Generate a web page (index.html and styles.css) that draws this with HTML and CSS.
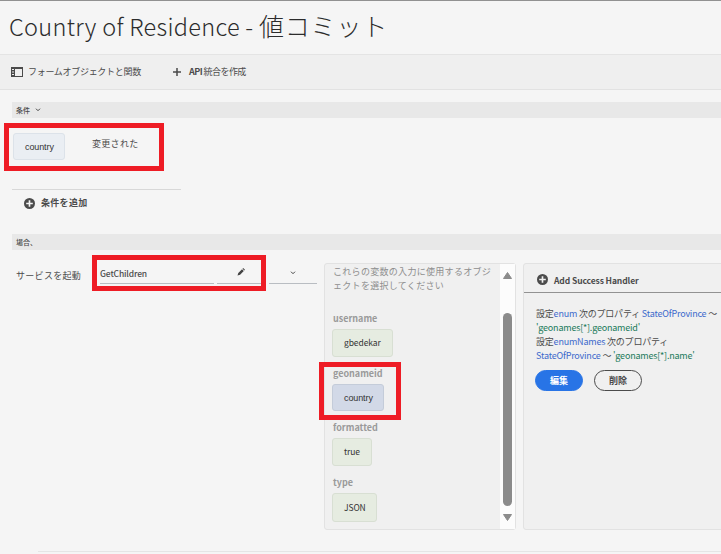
FILE: index.html
```html
<!DOCTYPE html>
<html lang="ja">
<head>
<meta charset="utf-8">
<title>Country of Residence - 値コミット</title>
<link rel="stylesheet" href="styles.css">
</head>
<body>
<header class="title-bar"><h1><span class="title-en">Country of Residence - </span><span class="title-ja">値コミット</span></h1></header>
<nav class="toolbar">
  <div class="tool objects">
    <svg width="12" height="10" viewBox="0 0 12 10"><path d="M0 0h12v10H0zM4 2v7h7V2z" fill="#4b4b4b" fill-rule="evenodd"/><path d="M1 2.5h2M1 5h2M1 7.5h2" stroke="#eee"/></svg>
    <span class="objects-label">フォームオブジェクトと関数</span>
  </div>
  <div class="tool create">
    <svg width="8" height="8" viewBox="0 0 8 8"><path d="M4 0v8M0 4h8" stroke="#4b4b4b" stroke-width="1.5"/></svg>
    <span class="create-label"><b>API</b> 統合を作成</span>
  </div>
</nav>
<main>
  <div class="section-bar"><span>条件</span><svg class="chev" width="6" height="4" viewBox="0 0 6 4"><path d="M1 .7l2 2 2-2" fill="none" stroke="#444"/></svg></div>
  <section class="condition">
    <div class="condition-row">
      <span class="pill blue light">country</span>
      <span class="changed">変更された</span>
      <i class="mark mark-condition"></i>
    </div>
    <div class="add-condition">
      <svg width="11" height="11" viewBox="0 0 10 10"><circle cx="5" cy="5" r="5" fill="#4b4b4b"/><path d="M5 2v6M2 5h6" stroke="#f5f5f5" stroke-width="1.5"/></svg>
      <span>条件を追加</span>
    </div>
  </section>
  <div class="section-bar"><span>場合、</span></div>
  <section class="action">
    <span class="invoke">サービスを起動</span>
    <div class="fields">
      <div class="field name">GetChildren</div>
      <div class="field edit"><svg width="8" height="8" viewBox="0 0 8 8"><path d="M.5 7.5l.8-2.6L5 1.2 6.8 3 3.1 6.7zM5.5.7L6.2 0 8 1.8l-.7.7z" fill="#444"/></svg></div>
      <div class="field pick"><svg width="6" height="4" viewBox="0 0 6 4"><path d="M1 .7l2 2 2-2" fill="none" stroke="#444"/></svg></div>
      <i class="mark mark-service"></i>
    </div>
    <div class="panel inputs">
      <div class="inputs-body">
        <p class="hint"><span>これらの変数の入力に使用するオブジ</span><br><span>ェクトを選択してください</span></p>
        <div class="param"><label>username</label><span class="pill green user">gbedekar</span></div>
        <div class="param geo"><label>geonameid</label><span class="pill blue">country</span><i class="mark mark-geo"></i></div>
        <div class="param formatted"><label>formatted</label><span class="pill green true">true</span></div>
        <div class="param type"><label>type</label><span class="pill green json">JSON</span></div>
      </div>
      <div class="scroll">
        <svg width="9" height="7" viewBox="0 0 9 7"><path d="M4.5.5L8.5 6.5H.5z" fill="#8b8b8b" stroke="#8b8b8b" stroke-linejoin="round"/></svg>
        <div class="thumb"></div>
        <svg width="9" height="7" viewBox="0 0 9 7"><path d="M4.5 6.5L.5.5h8z" fill="#8b8b8b" stroke="#8b8b8b" stroke-linejoin="round"/></svg>
      </div>
    </div>
    <div class="panel handler">
      <div class="handler-head">
        <svg width="11" height="11" viewBox="0 0 10 10"><circle cx="5" cy="5" r="5" fill="#4b4b4b"/><path d="M5 2v6M2 5h6" stroke="#f0f0f0" stroke-width="1.5"/></svg>
        <span>Add Success Handler</span>
      </div>
      <div class="rules">
        <div>設定<em>enum</em> 次のプロパティ <em>StateOfProvince</em> ～</div>
        <div><q>'geonames[*].geonameid'</q></div>
        <div>設定<em>enumNames</em> 次のプロパティ</div>
        <div><em>StateOfProvince</em> ～ <q>'geonames[*].name'</q></div>
      </div>
      <div class="buttons"><button class="primary">編集</button><button>削除</button></div>
    </div>
  </section>
  <hr class="footer-line">
</main>
</body>
</html>
```
FILE: styles.css
```css
* { box-sizing: border-box; }
body {
  margin: 0;
  width: 721px;
  height: 554px;
  overflow: hidden;
  background: #f5f5f5;
  color: #4b4b4b;
  font: 9px/12px "Noto Sans CJK JP", sans-serif;
  white-space: nowrap;
}
svg { display: block; flex: none; }
.title-bar {
  height: 55px;
  border-top: 1px solid #919191;
  border-bottom: 1px solid #e4e4e4;
  padding: 4px 0 0 9px;
}
h1 { margin: 0; font-size: 25px; line-height: 40px; font-weight: 300; color: #2c2c2c; white-space: pre; }
.title-en { font-size: 23.5px; letter-spacing: .3px; }
.title-ja { letter-spacing: .8px; }
.toolbar {
  display: flex;
  align-items: center;
  height: 35px;
  background: #efefef;
  border-bottom: 1px solid #e2e2e2;
}
.tool { display: flex; align-items: center; }
.objects { margin-left: 11px; gap: 5px; width: 162px; }
.objects-label { letter-spacing: -.3px; }
.create { gap: 8px; }
.create-label { letter-spacing: -.55px; }
main { padding: 12px 0 0 12px; }
.section-bar {
  display: flex;
  align-items: center;
  gap: 5px;
  height: 16px;
  padding: 0 0 1px 4px;
  background: #e8e8e8;
  font-size: 7px;
  font-weight: 500;
}
.chev { margin-top: 1px; }
.condition { height: 116px; padding-top: 15px; }
.condition-row { position: relative; display: flex; height: 57px; width: 169px; padding-left: 1px; border-bottom: 1px solid #d8d8d8; }
.changed { margin: 5px 0 0 27px; letter-spacing: .3px; }
.pill {
  display: flex;
  align-items: center;
  width: 52px;
  height: 27px;
  padding-left: 11px;
  border: 1px solid;
  border-radius: 3px;
  color: #333;
}
.blue { background: #d2d9e7; border-color: #c4ccd9; font-family: "Liberation Sans", sans-serif; letter-spacing: -.1px; }
.light { background: #eaeef3; border-color: #dce2e9; }
.green { background: #e6ece1; border-color: #d8dfd3; height: 28px; padding-bottom: 2px; font-size: 8.5px; letter-spacing: -.1px; }
.user { width: 61px; }
.true { width: 40px; }
.json { width: 45px; height: 29px; }
.mark { position: absolute; border: 5px solid #ee1c25; }
.mark-condition { left: -8px; top: -10px; width: 160px; height: 48px; }
.add-condition { display: flex; align-items: center; gap: 6px; padding: 7px 0 0 12px; font-weight: 700; }
.add-condition span { letter-spacing: .3px; }
.action { display: flex; height: 280px; padding-top: 13px; }
.invoke { flex: none; width: 88px; padding: 7px 0 0 4px; letter-spacing: .3px; }
.fields { flex: none; position: relative; display: flex; gap: 3px; width: 224px; height: 21px; }
.field { flex: none; border-bottom: 1px solid #b9bdc2; display: flex; align-items: center; justify-content: center; }
.name { width: 114px; justify-content: flex-start; padding-bottom: 1px; font-size: 8.5px; font-weight: 500; letter-spacing: -.15px; }
.edit { width: 49px; padding: 0 2px 2px 0; }
.pick { width: 48px; }
.mark-service { left: -8px; top: -8px; width: 174px; height: 36px; }
.panel { flex: none; height: 267px; background: #f0f0f0; border: 1px solid #e2e2e2; border-radius: 3px; }
.inputs { display: flex; width: 192px; }
.inputs-body { width: 175px; padding: 1px 0 0 8px; }
.inputs .pill { margin-left: -1px; }
.hint { margin: 0; height: 47px; line-height: 14px; color: #8e8e8e; letter-spacing: .3px; }
.param { position: relative; height: 55px; }
.param label { display: block; height: 17px; line-height: 13px; font-weight: 700; color: #9a9a9a; letter-spacing: 0; }
.param.geo { height: 54px; }
.mark-geo { left: -14px; top: -5px; width: 82px; height: 58px; }
.scroll { width: 15px; background: #fcfcfc; display: flex; flex-direction: column; align-items: center; padding-top: 8px; }
.thumb { width: 9px; height: 193px; margin: 34px 0 8px; border-radius: 5px; background: #8b8b8b; }
.handler { width: 210px; margin-left: 7px; }
.handler-head { display: flex; align-items: center; gap: 6px; height: 29px; padding: 3px 0 0 13px; border-bottom: 1px solid #929292; font-size: 8.5px; font-weight: 700; letter-spacing: -.1px; }
.rules { margin: 14px 0 0 12px; line-height: 14px; letter-spacing: -.2px; }
.rules em { font-style: normal; color: #3d6acc; }
.rules q { quotes: none; color: #207a5a; }
.buttons { display: flex; gap: 11px; margin: 7px 0 0 11px; }
button { width: 48px; height: 21px; padding: 0; border: 1px solid #4b4b4b; border-radius: 11px; background: transparent; color: #4b4b4b; font: 700 9px/16px "Noto Sans CJK JP", sans-serif; }
button.primary { border-color: #2874e6; background: #2874e6; color: #fff; }
.footer-line { height: 1px; margin: 21px 0 0 26px; border: 0; background: #e5e5e5; }
```
